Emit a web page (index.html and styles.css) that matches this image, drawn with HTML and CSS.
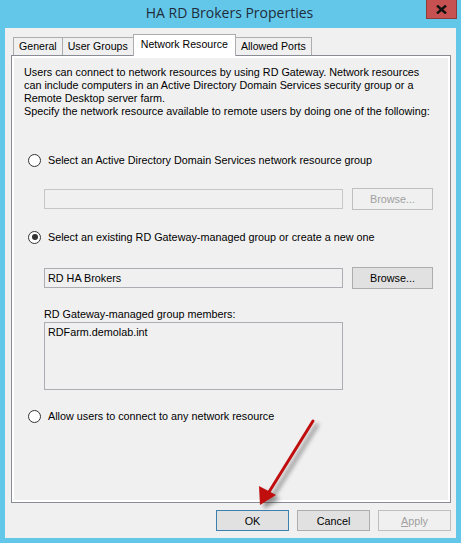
FILE: index.html
```html
<!DOCTYPE html>
<html>
<head>
<meta charset="utf-8">
<link rel="stylesheet" href="styles.css">
</head>
<body>
<div class="window">
  <div class="titlebar">
    <div class="title">HA RD Brokers Properties</div>
    <div class="close"><svg width="11" height="9" viewBox="0 0 11 9"><path d="M1 0.5 L10 8.5 M10 0.5 L1 8.5" stroke="#111" stroke-width="2.4"/></svg></div>
  </div>
  <div class="client">
    <div class="tabs">
      <div class="tab">General</div>
      <div class="tab">User Groups</div>
      <div class="tab active">Network Resource</div>
      <div class="tab">Allowed Ports</div>
    </div>
    <div class="panel">
      <div class="desc">
        <p class="desc-p">Users can connect to network resources by using RD Gateway. Network resources can include computers in an Active Directory Domain Services security group or a Remote Desktop server farm.</p>
        <p class="desc-p nowrap">Specify the network resource available to remote users by doing one of the following:</p>
      </div>
      <div class="option opt1"><span class="radio"></span><span>Select an Active Directory Domain Services network resource group</span></div>
      <div class="row row1">
        <div class="textbox disabled"></div>
        <div class="btn disabled-btn">Browse...</div>
      </div>
      <div class="option opt2"><span class="radio checked"></span><span>Select an existing RD Gateway-managed group or create a new one</span></div>
      <div class="row row2">
        <div class="textbox">RD HA Brokers</div>
        <div class="btn">Browse...</div>
      </div>
      <div class="members-label">RD Gateway-managed group members:</div>
      <div class="listbox">RDFarm.demolab.int</div>
      <div class="option opt3"><span class="radio"></span><span>Allow users to connect to any network resource</span></div>
    </div>
    <div class="buttons">
      <div class="btn default">OK</div>
      <div class="btn">Cancel</div>
      <div class="btn disabled-btn"><u>A</u>pply</div>
    </div>
  </div>
  <svg class="arrow" width="461" height="543" viewBox="0 0 461 543">
    <defs>
      <filter id="sh" x="-50%" y="-50%" width="200%" height="200%">
        <feGaussianBlur stdDeviation="2.2"/>
      </filter>
    </defs>
    <g transform="translate(4,4)" opacity="0.55" filter="url(#sh)">
      <path d="M313 421 L269 492" stroke="#444" stroke-width="3.5" stroke-linecap="round"/>
      <path d="M260 505 L259 486 L276 495 Z" fill="#444"/>
    </g>
    <path d="M313 421 L269 492" stroke="#c00e0e" stroke-width="3" stroke-linecap="round"/>
    <path d="M260 505 L259 486 L276 495 Z" fill="#c00e0e"/>
  </svg>
</div>
</body>
</html>
```
FILE: styles.css
```css
* { box-sizing: border-box; }
html, body { margin: 0; padding: 0; }
body {
  width: 461px;
  height: 543px;
  background: #63c7ea;
  font-family: "Liberation Sans", Arial, sans-serif;
  font-size: 10.8px;
  color: #000;
  overflow: hidden;
}
.window {
  position: relative;
  width: 461px;
  height: 543px;
  display: flex;
  flex-direction: column;
}
.titlebar {
  height: 28px;
  display: flex;
  justify-content: center;
  position: relative;
}
.title {
  font-family: "Open Sans", "Liberation Sans", sans-serif;
  font-size: 14px;
  color: #1f2d3a;
  margin-top: 3px;
  margin-left: -2px;
}
.close {
  position: absolute;
  right: 4px;
  top: 0;
  width: 31px;
  height: 19px;
  background: #c75050;
  border: 1px solid #8e3a3a;
  border-top: none;
  display: flex;
  align-items: center;
  justify-content: center;
}
.client {
  margin: 0 5px 5px 5px;
  height: 510px;
  background: #f0f0f0;
  display: flex;
  flex-direction: column;
  padding: 0 5px 0 6px;
}
.tabs {
  display: flex;
  align-items: flex-end;
  height: 27px;
  padding-left: 2px;
  position: relative;
  z-index: 2;
}
.tab {
  height: 18px;
  border: 1px solid #adadad;
  border-bottom: none;
  background: #f0f0f0;
  padding: 0 5px;
  line-height: 17px;
  white-space: nowrap;
  margin-right: -1px;
  font-size: 10.6px;
}
.tab.active {
  height: 22px;
  background: #ffffff;
  padding: 0 7px;
  line-height: 18px;
  margin-bottom: -1px;
  position: relative;
  z-index: 3;
}
.panel {
  height: 448px;
  border: 1px solid #898c95;
  box-shadow: inset 0 0 0 2px #ffffff;
  background: #f0f0f0;
  padding: 10px 0 0 12px;
  display: flex;
  flex-direction: column;
}
.desc {
  line-height: 13px;
}
.desc-p {
  margin: 0;
  width: 397px;
}
.desc-p.nowrap {
  white-space: nowrap;
}
.option {
  display: flex;
  align-items: center;
  height: 14px;
}
.option .radio {
  width: 13px;
  height: 13px;
  border: 1px solid #333333;
  border-radius: 50%;
  background: #ffffff;
  margin-left: 4px;
  margin-right: 7px;
  display: flex;
  align-items: center;
  justify-content: center;
  flex-shrink: 0;
}
.option .radio.checked::after {
  content: "";
  width: 6px;
  height: 6px;
  border-radius: 50%;
  background: #333333;
}
.opt1 { margin-top: 35px; }
.opt2 { margin-top: 20px; }
.opt3 { margin-top: 19px; }
.row {
  display: flex;
  margin-left: 20px;
  gap: 9px;
}
.row1 { margin-top: 22px; }
.row2 { margin-top: 24px; }
.textbox {
  width: 299px;
  height: 20px;
  border: 1px solid #abadb3;
  background: #f0f0f0;
  padding: 2px 3px;
  line-height: 15px;
}
.textbox.disabled { border-color: #c6c6c6; }
.btn {
  width: 81px;
  height: 22px;
  border: 1px solid #adadad;
  background: #e1e1e1;
  display: flex;
  align-items: center;
  justify-content: center;
}
.row .btn { width: 81px; height: 22px; margin-top: -1px; }
.disabled-btn {
  background: #f0f0f0;
  border-color: #bfbfbf;
  color: #a0a0a0;
}
.members-label {
  margin-left: 20px;
  margin-top: 18px;
  line-height: 14px;
}
.listbox {
  margin-left: 20px;
  margin-top: 1px;
  width: 299px;
  height: 68px;
  border: 1px solid #abadb3;
  background: #f0f0f0;
  padding: 2px 3px;
  line-height: 15px;
}
.buttons {
  display: flex;
  justify-content: flex-end;
  gap: 8px;
  margin-top: 7px;
}
.buttons .btn {
  width: 73px;
  height: 21px;
}
.buttons .btn.default {
  border-color: #3c7fb1;
}
.arrow {
  position: absolute;
  left: 0;
  top: 0;
  pointer-events: none;
  z-index: 10;
}
```
